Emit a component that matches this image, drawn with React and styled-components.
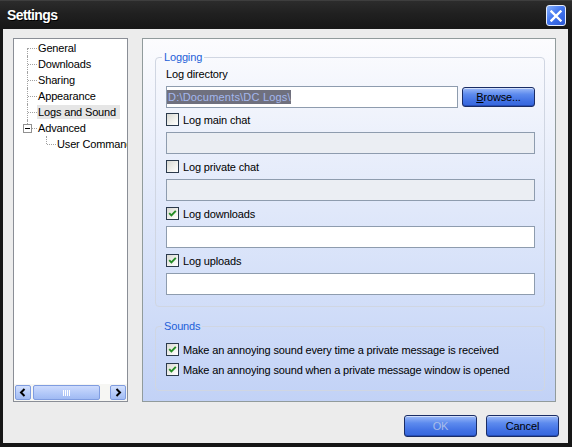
import React from 'react';
import styled, { createGlobalStyle } from 'styled-components';

const GlobalStyle = createGlobalStyle`
  html, body { margin: 0; padding: 0; background: #000; }
  body {
    font-family: "Liberation Sans", Arial, sans-serif;
    font-size: 11px;
    letter-spacing: -0.15px;
    color: #000;
  }
  * { box-sizing: border-box; }
`;

const Window = styled.div`
  width: 572px;
  height: 447px;
  display: flex;
  flex-direction: column;
  background: #161616;
`;

const TitleBar = styled.div`
  height: 29px;
  flex: none;
  display: flex;
  align-items: center;
  justify-content: space-between;
  padding: 0 6px 0 7px;
  border-top: 1px solid #3e3e3e;
  background: linear-gradient(to bottom, #2c2c2c 0%, #202020 45%, #171717 100%);
`;

const Title = styled.div`
  color: #fff;
  font-weight: bold;
  font-size: 14px;
  letter-spacing: -0.6px;
  text-shadow: 1px 1px 0 #000;
  padding-bottom: 1px;
`;

const CloseButton = styled.div`
  width: 20px;
  height: 21px;
  border: 1px solid #e8eefc;
  border-radius: 3px;
  background: linear-gradient(135deg, #86b0fc 0%, #4477f0 45%, #2a57d6 100%);
  display: flex;
  align-items: center;
  justify-content: center;
  margin-top: 1px;
`;

const Client = styled.div`
  flex: 1;
  margin: 0 4px 4px 3px;
  background: #ececec;
  display: flex;
  flex-direction: column;
  padding: 9px 9px 6px 10px;
`;

const Main = styled.div`
  height: 364px;
  flex: none;
  display: flex;
  gap: 14px;
  margin-right: 3px;
`;

const Tree = styled.div`
  width: 115px;
  flex: none;
  background: #fff;
  border: 1px solid #8a8e96;
  display: flex;
  flex-direction: column;
`;

const TreeList = styled.div`
  flex: 1;
  padding-top: 1px;
  overflow: hidden;
`;

const TreeRow = styled.div`
  display: flex;
  align-items: center;
  height: 16px;
  white-space: nowrap;
`;

const Gutter = styled.span`
  position: relative;
  flex: none;
  width: ${(p) => p.$w}px;
  height: 16px;
  &::before {
    content: '';
    position: absolute;
    left: ${(p) => p.$x}px;
    top: ${(p) => (p.$first ? '8px' : '0')};
    bottom: ${(p) => (p.$last ? '8px' : '0')};
    border-left: 1px dotted #a2a2a2;
  }
  &::after {
    content: '';
    position: absolute;
    left: ${(p) => p.$x + 1}px;
    width: 9px;
    top: 8px;
    border-top: 1px dotted #a2a2a2;
  }
`;

const Expander = styled.span`
  position: absolute;
  left: 9px;
  top: 4px;
  width: 9px;
  height: 9px;
  border: 1px solid #919191;
  background: #fff;
  z-index: 1;
  &::after {
    content: '';
    position: absolute;
    left: 1px;
    right: 1px;
    top: 3px;
    border-top: 1px solid #000;
  }
`;

const TreeLabel = styled.span`
  padding: 0 4px 0 1px;
  line-height: 14px;
  background: ${(p) => (p.$selected ? '#e6e6e6' : 'transparent')};
`;

const ScrollBar = styled.div`
  height: 17px;
  flex: none;
  display: flex;
  padding: 1px;
  background: #f6f6f3;
`;

const ScrollButton = styled.div`
  width: 16px;
  flex: none;
  border: 1px solid #7f9ce0;
  border-radius: 2px;
  background: linear-gradient(to bottom, #d3e0fd 0%, #b3c9f8 60%, #a3bcf3 100%);
  display: flex;
  align-items: center;
  justify-content: center;
`;

const Thumb = styled.div`
  width: 67px;
  margin-left: 2px;
  border: 1px solid #7f9ce0;
  border-radius: 2px;
  background: linear-gradient(to bottom, #cddbfd 0%, #b1c7f8 60%, #a0baf3 100%);
  display: flex;
  align-items: center;
  justify-content: center;
`;

const Grip = styled.span`
  width: 7px;
  height: 6px;
  background: repeating-linear-gradient(to right, #fff 0 1px, transparent 1px 2px);
`;

const Spacer = styled.div`
  flex: 1;
`;

const Page = styled.div`
  flex: 1;
  border: 1px solid #919b9c;
  background: linear-gradient(to bottom, #fcfcfe 0%, #eaeffb 30%, #d6e1f9 65%, #c2d2f6 100%);
  padding: 0 10px 0 12px;
  display: flex;
  flex-direction: column;
`;

const GroupBox = styled.fieldset`
  margin: ${(p) => p.$mt}px 0 0;
  padding: 0;
  min-width: 0;
  border: 1px solid #d0d6e2;
  border-radius: 4px;
`;

const Legend = styled.legend`
  margin-left: 6px;
  padding: 0 2px;
  line-height: 14px;
  color: #1d5fd8;
`;

const GroupBody = styled.div`
  display: flex;
  flex-direction: column;
  padding: ${(p) => p.$pt}px 9px ${(p) => p.$pb}px 10px;
`;

const FieldLabel = styled.div`
  line-height: 13px;
`;

const BrowseRow = styled.div`
  display: flex;
  align-items: center;
  gap: 4px;
  margin-top: 5px;
`;

const TextBox = styled.div`
  flex: ${(p) => (p.$grow ? '1 1 auto' : 'none')};
  height: 22px;
  margin-top: ${(p) => p.$mt || 0}px;
  border: 1px solid #8e9cae;
  background: ${(p) => (p.$disabled ? '#ebeef3' : '#fff')};
  display: flex;
  align-items: center;
`;

const Selected = styled.span`
  background: #6f707e;
  color: #a4b7ee;
  line-height: 14px;
  letter-spacing: 0.2px;
  padding-left: 1px;
`;

const CheckRow = styled.label`
  display: flex;
  align-items: center;
  gap: 4px;
  height: 13px;
  flex: none;
  margin-top: ${(p) => p.$mt}px;
`;

const Box = styled.span`
  width: 13px;
  height: 13px;
  flex: none;
  border: 1px solid #2b3a4c;
  background: linear-gradient(135deg, #d8d8d2 0%, #f2f2ee 60%, #ffffff 100%);
  display: flex;
  align-items: center;
  justify-content: center;
`;

const Button = styled.div`
  width: 73px;
  height: ${(p) => p.$h}px;
  flex: none;
  border: 1px solid #1a2d66;
  border-radius: 3px;
  background: linear-gradient(to bottom, #9dbaf7 0%, #5d8bee 35%, #3f6fe3 75%, #3566dc 100%);
  box-shadow: inset 0 1px 0 rgba(255, 255, 255, 0.55), inset 0 -1px 0 rgba(10, 30, 110, 0.35);
  color: ${(p) => (p.$disabled ? '#a9bde9' : '#000')};
  display: flex;
  align-items: center;
  justify-content: center;
`;

const Footer = styled.div`
  display: flex;
  justify-content: flex-end;
  gap: 9px;
  margin-top: 13px;
`;

const Check = ({ checked }) => (
  <Box>
    {checked && (
      <svg width="9" height="9" viewBox="0 0 9 9">
        <path d="M1.2 4.2 L3.4 6.4 L7.8 1.8" fill="none" stroke="#248c24" strokeWidth="1.9" />
      </svg>
    )}
  </Box>
);

const CheckField = ({ checked, label, mt }) => (
  <CheckRow $mt={mt}>
    <Check checked={checked} />
    <span>{label}</span>
  </CheckRow>
);

const Chevron = ({ dir }) => (
  <svg width="8" height="9" viewBox="0 0 8 9">
    <polyline
      points={dir === 'left' ? '5.5,1 2,4.5 5.5,8' : '2.5,1 6,4.5 2.5,8'}
      fill="none"
      stroke="#000"
      strokeWidth="2"
    />
  </svg>
);

const rootItems = ['General', 'Downloads', 'Sharing', 'Appearance', 'Logs and Sound'];

export default function App() {
  return (
    <>
      <GlobalStyle />
      <Window>
        <TitleBar>
          <Title>Settings</Title>
          <CloseButton>
            <svg width="12" height="12" viewBox="0 0 12 12">
              <path d="M1.5 1.5 L10.5 10.5 M10.5 1.5 L1.5 10.5" stroke="#fff" strokeWidth="2.4" strokeLinecap="square" />
            </svg>
          </CloseButton>
        </TitleBar>
        <Client>
          <Main>
            <Tree>
              <TreeList>
                {rootItems.map((name, i) => (
                  <TreeRow key={name}>
                    <Gutter $w={23} $x={13} $first={i === 0} />
                    <TreeLabel $selected={name === 'Logs and Sound'}>{name}</TreeLabel>
                  </TreeRow>
                ))}
                <TreeRow>
                  <Gutter $w={23} $x={13} $last>
                    <Expander />
                  </Gutter>
                  <TreeLabel>Advanced</TreeLabel>
                </TreeRow>
                <TreeRow>
                  <Gutter $w={42} $x={32} $last />
                  <TreeLabel>User Commands</TreeLabel>
                </TreeRow>
              </TreeList>
              <ScrollBar>
                <ScrollButton>
                  <Chevron dir="left" />
                </ScrollButton>
                <Thumb>
                  <Grip />
                </Thumb>
                <Spacer />
                <ScrollButton>
                  <Chevron dir="right" />
                </ScrollButton>
              </ScrollBar>
            </Tree>
            <Page>
              <GroupBox $mt={11}>
                <Legend>Logging</Legend>
                <GroupBody $pt={4} $pb={11}>
                  <FieldLabel>Log directory</FieldLabel>
                  <BrowseRow>
                    <TextBox $grow>
                      <Selected>D:\Documents\DC Logs\</Selected>
                    </TextBox>
                    <Button $h={20}>
                      <span>
                        <u>B</u>rowse...
                      </span>
                    </Button>
                  </BrowseRow>
                  <CheckField label="Log main chat" mt={5} />
                  <TextBox $mt={6} $disabled />
                  <CheckField label="Log private chat" mt={6} />
                  <TextBox $mt={6} $disabled />
                  <CheckField label="Log downloads" checked mt={6} />
                  <TextBox $mt={6} />
                  <CheckField label="Log uploads" checked mt={6} />
                  <TextBox $mt={6} />
                </GroupBody>
              </GroupBox>
              <GroupBox $mt={12}>
                <Legend>Sounds</Legend>
                <GroupBody $pt={10} $pb={14}>
                  <CheckField checked mt={0} label="Make an annoying sound every time a private message is received" />
                  <CheckField checked mt={7} label="Make an annoying sound when a private message window is opened" />
                </GroupBody>
              </GroupBox>
            </Page>
          </Main>
          <Footer>
            <Button $h={22} $disabled>OK</Button>
            <Button $h={22}>Cancel</Button>
          </Footer>
        </Client>
      </Window>
    </>
  );
}
